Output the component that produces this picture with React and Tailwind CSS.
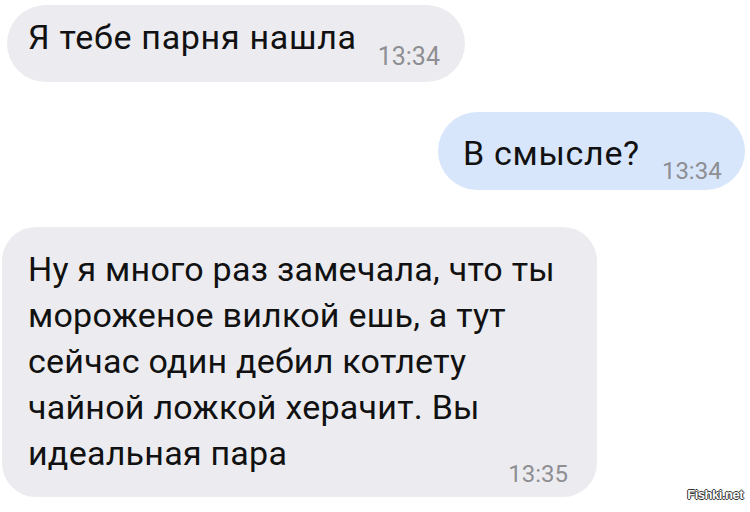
import React from "react";

const font = { fontFamily: "Roboto, 'Noto Sans', sans-serif" };

export default function App() {
  return (
    <div className="w-[750px] h-[512px] bg-white relative overflow-hidden flex flex-col text-[#111]" style={font}>
      {/* incoming */}
      <div className="ml-[7px] mt-[5px] w-[458px] h-[77px] rounded-full bg-[#ececf0] flex items-start pt-[12px] pl-[21px]">
        <span className="text-[34px] leading-[40px] tracking-[0.7px]">Я тебе парня нашла</span>
        <span className="ml-[21px] mt-[27px] text-[25px] leading-[25px] text-[#8e8e93]">13:34</span>
      </div>

      {/* outgoing */}
      <div className="self-end mr-[5px] mt-[30px] w-[307px] h-[78px] rounded-full bg-[#d8e6fb] flex items-start pt-[21px] pl-[25px]">
        <span className="text-[34px] leading-[40px] tracking-[0.7px]">В смысле?</span>
        <span className="ml-[22px] mt-[26px] text-[24px] leading-[24px] text-[#8e8e93]">13:34</span>
      </div>

      {/* incoming long */}
      <div className="ml-[2px] mt-[37px] w-[595px] h-[270px] rounded-[34px] bg-[#ececf0] flex flex-col pt-[19px] pl-[26px] pr-[29px]">
        <p className="text-[34px] leading-[46px] tracking-[0.25px]">
          Ну я много раз замечала, что ты<br />
          мороженое вилкой ешь, а тут<br />
          сейчас один дебил котлету<br />
          чайной ложкой херачит. Вы
        </p>
        <div className="flex items-start justify-between">
          <span className="text-[34px] leading-[46px] tracking-[0.25px]">идеальная пара</span>
          <span className="mt-[32px] text-[24px] leading-[24px] text-[#8e8e93]">13:35</span>
        </div>
      </div>

      <span
        className="absolute right-[7px] bottom-[11px] text-[13px] font-bold leading-none text-white tracking-[-0.5px]"
        style={{ fontFamily: "'Liberation Sans', Arial, sans-serif", textShadow: "1px 0 #333, -1px 0 #333, 0 1px #333, 0 -1px #333" }}
      >
        Fishki.net
      </span>
    </div>
  );
}
